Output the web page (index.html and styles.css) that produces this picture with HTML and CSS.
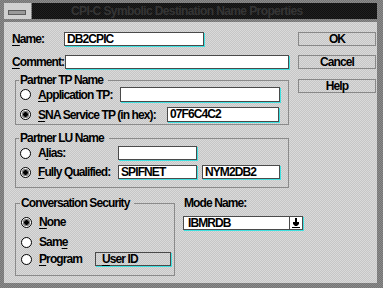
FILE: index.html
```html
<!DOCTYPE html>
<html lang="en">
<head>
    <meta charset="UTF-8">
    <title>CPI-C Symbolic Destination Name Properties</title>
    <link rel="stylesheet" href="styles.css">
</head>
<body>
<div class="window">
    <div class="titlebar">
        <div class="sysmenu"><span class="sysbar"></span></div>
        <div class="title">CPI-C Symbolic Destination Name Properties</div>
    </div>
    <div class="client">
        <div class="form">
            <div class="line">
                <span class="lbl name-lbl"><u>N</u>ame:</span>
                <div class="field name-field">DB2CPIC</div>
            </div>
            <div class="line comment-line">
                <span class="lbl comment-lbl"><u>C</u>omment:</span>
                <div class="field comment-field"></div>
            </div>

            <fieldset class="group tp-group">
                <legend>Partner TP Name</legend>
                <div class="opt">
                    <span class="radio"></span>
                    <span class="opt-lbl"><u>A</u>pplication TP:</span>
                    <div class="field app-field"></div>
                </div>
                <div class="opt opt2">
                    <span class="radio on"></span>
                    <span class="opt-lbl"><u>S</u>NA Service TP (in hex):</span>
                    <div class="field sna-field">07F6C4C2</div>
                </div>
            </fieldset>

            <fieldset class="group lu-group">
                <legend>Partner LU Name</legend>
                <div class="opt lu-opt">
                    <span class="radio"></span>
                    <span class="opt-lbl lu-lbl">A<u>l</u>ias:</span>
                    <div class="field lu-field"></div>
                </div>
                <div class="opt lu-opt opt2">
                    <span class="radio on"></span>
                    <span class="opt-lbl lu-lbl"><u>F</u>ully Qualified:</span>
                    <div class="field lu-field">SPIFNET</div>
                    <div class="field lu-field net-field">NYM2DB2</div>
                </div>
            </fieldset>

            <div class="bottom">
                <fieldset class="group sec-group">
                    <legend>Conversation Security</legend>
                    <div class="opt sec-opt">
                        <span class="radio on"></span>
                        <span class="opt-lbl"><u>N</u>one</span>
                    </div>
                    <div class="opt sec-opt same">
                        <span class="radio"></span>
                        <span class="opt-lbl">Sam<u>e</u></span>
                    </div>
                    <div class="opt sec-opt prog">
                        <span class="radio"></span>
                        <span class="opt-lbl"><u>P</u>rogram</span>
                        <div class="field user-field"><u>U</u>ser ID</div>
                    </div>
                </fieldset>
                <div class="mode">
                    <div class="mode-lbl">Mode Name:</div>
                    <div class="field combo">
                        <span class="combo-text">IBMRDB</span>
                        <span class="combo-btn">
                            <svg width="9" height="10" viewBox="0 0 9 10">
                                <rect x="3" y="0" width="2" height="4" fill="#000"/>
                                <polygon points="1,4 7,4 7,6 5,8 3,8 1,6" fill="#000"/>
                                <rect x="0" y="9" width="8" height="1" fill="#000"/>
                            </svg>
                        </span>
                    </div>
                </div>
            </div>
        </div>

        <div class="buttons">
            <div class="btn">OK</div>
            <div class="btn cancel">Cancel</div>
            <div class="btn help">Help</div>
        </div>
    </div>
</div>
</body>
</html>
```

FILE: styles.css
```css
*{padding: 0;
margin: 0;
box-sizing: border-box;}
body{
    width: 383px;
    height: 288px;
    overflow: hidden;
    font-family: "Liberation Sans", Arial, sans-serif;
    font-size: 12px;
    font-weight: bold;
    letter-spacing: -0.9px;
    color: #000;
}
u{text-decoration: underline;
    text-underline-offset: 2px;}

/* frame + title */
.window{
    height: 288px;
    padding: 3px 6px 5px 4px;
    background-color: #808080;
    background-image: repeating-conic-gradient(#747474 0 25%, #8c8c8c 0 50%);
    background-size: 2px 2px;
}
.titlebar{
    display: flex;
    height: 16px;
}
.sysmenu{
    width: 27px;
    background: #d0d0d0;
    padding: 7px 0 0 4px;
}
.sysbar{
    display: block;
    width: 18px;
    height: 5px;
    background: #9a9a9a;
    border: 1px solid #5c5c5c;
}
.title{
    flex: 1;
    margin-left: 1px;
    background-color: #161616;
    background-image: repeating-conic-gradient(#111 0 25%, #1f1f1f 0 50%);
    background-size: 2px 2px;
    color: #363636;
    line-height: 16px;
    padding-left: 39px;
    white-space: nowrap;
    letter-spacing: -0.6px;
}

/* client area */
.client{
    margin-top: 3px;
    height: 261px;
    display: flex;
    padding: 10px 0 0 8px;
    background-color: #d0d0d0;
    background-image: repeating-conic-gradient(#c6c6c6 0 25%, #dadada 0 50%);
    background-size: 2px 2px;
}
.form{
    width: 277px;
    flex: none;
}
.line{
    display: flex;
    align-items: center;
    height: 14px;
}
.comment-line{margin-top: 9px;}
.lbl{line-height: 14px; flex: none; white-space: nowrap;}
.name-lbl{width: 52px;}
.comment-lbl{width: 53px;}

.field{
    height: 14px;
    background: #fff;
    border: 1px solid #4a4a4a;
    box-shadow: 1px 1px 0 #3fe0e0;
    line-height: 12px;
    padding-left: 2px;
    white-space: nowrap;
    flex: none;
}
.name-field{width: 140px;}
.comment-field{width: 224px;}

/* group boxes */
.group{
    margin-left: 3px;
    width: 274px;
    min-width: 0;
    border: 1px solid #8a8a8a;
    padding: 0 0 2px 4px;
}
.group legend{
    line-height: 14px;
    padding: 0 5px 0 1px;
    margin-left: -1px;
}
.tp-group{margin-top: 4px;}
.lu-group{margin-top: 6px; padding-bottom: 8px;}

.opt{
    display: flex;
    align-items: center;
    height: 15px;
}
.opt2{margin-top: 5px;}
.radio{
    width: 11px;
    height: 11px;
    border-radius: 50%;
    border: 1px solid #000;
    background: #fff;
    flex: none;
}
.radio.on{
    background: radial-gradient(circle, #000 0 2px, #808080 2.5px 3.5px, #fff 4px);
}
.opt-lbl{
    margin-left: 7px;
    line-height: 14px;
    white-space: nowrap;
    flex: none;
}
.app-field{
    margin: 0 8px 0 auto;
    width: 160px;
    height: 15px;
}
.sna-field{
    margin: 0 9px 0 auto;
    width: 112px;
    height: 15px;
    line-height: 13px;
}

.lu-opt{height: 14px;}
.lu-group .lu-opt:first-of-type{margin-top: 1px;}
.lu-lbl{width: 80px;}
.lu-field{width: 79px;}
.net-field{margin-left: 5px; width: 78px;}

/* bottom row */
.bottom{
    display: flex;
    margin-top: 8px;
}
.sec-group{
    flex: none;
    width: 160px;
    padding: 5px 3px 9px 5px;
}
.sec-opt{height: 14px;}
.same{margin-top: 6px;}
.prog{margin-top: 3px;}
.user-field{
    margin-left: auto;
    width: 76px;
    background: transparent;
    padding-left: 6px;
}

.mode{
    flex: none;
    margin-left: 8px;
}
.mode-lbl{
    line-height: 14px;
    padding-left: 1px;
}
.combo{
    margin-top: 6px;
    width: 120px;
    display: flex;
    padding-left: 4px;
}
.combo-text{flex: 1;}
.combo-btn{
    width: 13px;
    border-left: 1px solid #4a4a4a;
    display: flex;
    justify-content: center;
    padding-top: 1px;
}

/* buttons */
.buttons{
    margin-left: 9px;
    width: 78px;
    flex: none;
}
.btn{
    height: 14px;
    border: 1px solid #888;
    text-align: center;
    line-height: 12px;
}
.cancel{margin-top: 9px;}
.help{margin-top: 10px;}
```
